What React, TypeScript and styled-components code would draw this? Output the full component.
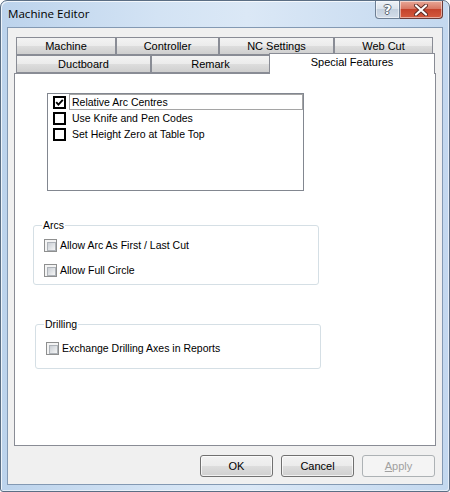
import styled, { createGlobalStyle } from "styled-components";

const GlobalStyle = createGlobalStyle`
  html, body {
    margin: 0;
    padding: 0;
    background: #ffffff;
  }
  body {
    font-family: "Liberation Sans", Arial, sans-serif;
    font-size: 10.5px;
    color: #000;
  }
  * {
    box-sizing: border-box;
  }
`;

const Window = styled.div`
  width: 450px;
  height: 492px;
  display: flex;
  flex-direction: column;
  border: 1px solid #5b6e84;
  border-radius: 7px 7px 3px 3px;
  padding: 0 6px 6px 6px;
  background: linear-gradient(to right, #bcd3ec 0%, #d3e3f4 35%, #dbe8f6 55%, #c3d8ef 100%);
  box-shadow: inset 1px 1px 0 rgba(255, 255, 255, 0.75),
    inset -1px -1px 0 rgba(255, 255, 255, 0.55);
`;

const TitleBar = styled.div`
  height: 26px;
  display: flex;
  justify-content: space-between;
  align-items: flex-start;
  padding-left: 1px;
`;

const Title = styled.div`
  font-family: "Open Sans", "Noto Sans", sans-serif;
  font-size: 11.6px;
  line-height: 16px;
  padding-top: 5px;
  color: #000;
`;

const CaptionButtons = styled.div`
  display: flex;
`;

const CaptionButton = styled.div<{ $close?: boolean }>`
  width: ${(p) => (p.$close ? 43 : 25)}px;
  height: 18px;
  display: flex;
  align-items: center;
  justify-content: center;
  border: 1px solid ${(p) => (p.$close ? "#6b3b38" : "#6e7f94")};
  border-top: none;
  border-radius: ${(p) => (p.$close ? "0 0 4px 0" : "0 0 0 4px")};
  ${(p) => (p.$close ? "border-left: none;" : "")}
  background: ${(p) =>
    p.$close
      ? "linear-gradient(to bottom, #e8a898 0%, #d87864 45%, #c4432c 50%, #d45a3e 100%)"
      : "linear-gradient(to bottom, #eef2f7 0%, #dbe3ec 45%, #c4d0de 50%, #d3dde9 100%)"};
  box-shadow: inset 0 0 0 1px rgba(255, 255, 255, 0.5);
`;

const HelpGlyph = styled.span`
  font-family: "DejaVu Sans", sans-serif;
  font-weight: bold;
  font-size: 13px;
  line-height: 13px;
  color: #ffffff;
  text-shadow: 1px 0 0 #59636f, -1px 0 0 #59636f, 0 1px 0 #59636f, 0 -1px 0 #59636f;
`;

const Client = styled.div`
  flex: 1;
  display: flex;
  flex-direction: column;
  background: #f0f0f0;
  border: 1px solid #8399b3;
  padding: 9px 6px 7px 6px;
`;

const TabControl = styled.div`
  flex: 1;
  display: flex;
  flex-direction: column;
`;

const TabRow = styled.div`
  display: flex;
  height: 18px;
  padding-left: 2px;
`;

const Tab = styled.div<{ $w: number; $active?: boolean }>`
  width: ${(p) => p.$w}px;
  height: ${(p) => (p.$active ? 21 : 18)}px;
  display: flex;
  align-items: center;
  justify-content: center;
  border: 1px solid #898c95;
  line-height: 13px;
  font-size: 11px;
  background: ${(p) =>
    p.$active ? "#ffffff" : "linear-gradient(to bottom, #f3f3f3 0%, #ebebeb 50%, #dddddd 51%, #cfcfcf 100%)"};
  ${(p) =>
    p.$active
      ? `
    margin-top: -2px;
    margin-left: -1px;
    border-bottom: none;
    position: relative;
    z-index: 1;
    padding-bottom: 3px;
  `
      : ""}
`;

const Panel = styled.div`
  flex: 1;
  display: flex;
  flex-direction: column;
  align-items: flex-start;
  border: 1px solid #898c95;
  background: #ffffff;
`;

const ListBox = styled.div`
  margin: 19px 0 0 32px;
  width: 257px;
  height: 98px;
  border: 1px solid #828790;
  background: #ffffff;
`;

const ListItem = styled.div`
  height: 16px;
  display: flex;
  align-items: center;
  padding-left: 5px;
`;

const FlatCheck = styled.div`
  width: 13px;
  height: 13px;
  border: 2px solid #000;
  background: #fff;
  display: flex;
  align-items: center;
  justify-content: center;
`;

const ItemText = styled.div<{ $focus?: boolean }>`
  margin-left: 3px;
  height: 16px;
  width: 234px;
  padding-left: 2px;
  line-height: 14px;
  border: 1px solid ${(p) => (p.$focus ? "#a5a5a5" : "transparent")};
`;

const GroupBox = styled.fieldset<{ $left: number; $top: number; $height: number }>`
  margin: ${(p) => p.$top}px 0 0 ${(p) => p.$left}px;
  width: 286px;
  height: ${(p) => p.$height}px;
  border: 1px solid #d5dfe5;
  border-radius: 3px;
  padding: 0 0 0 11px;
  min-width: 0;
`;

const Legend = styled.legend`
  margin-left: -3px;
  padding: 0 1px;
  line-height: 13px;
`;

const CheckRow = styled.label<{ $gap: number }>`
  display: flex;
  align-items: center;
  height: 13px;
  margin-top: ${(p) => p.$gap}px;
`;

const VistaCheck = styled.span`
  width: 13px;
  height: 13px;
  margin-left: -1px;
  border: 1px solid #8e8f8f;
  background: #f4f4f4;
  padding: 2px;
  display: block;
  &::after {
    content: "";
    display: block;
    width: 7px;
    height: 7px;
    border: 1px solid #aeb3b9;
    background: linear-gradient(135deg, #cbcfd5 0%, #dfe2e5 50%, #f6f6f6 100%);
  }
`;

const CheckText = styled.span`
  margin-left: 3px;
  line-height: 13px;
`;

const ButtonRow = styled.div`
  display: flex;
  justify-content: flex-end;
  gap: 8px;
  margin-top: 9px;
  padding-right: 1px;
`;

const Button = styled.button<{ $disabled?: boolean }>`
  width: 73px;
  height: 22px;
  font-family: "Liberation Sans", Arial, sans-serif;
  font-size: 11px;
  padding: 0;
  border-radius: 3px;
  border: 1px solid ${(p) => (p.$disabled ? "#adb2b5" : "#707070")};
  color: ${(p) => (p.$disabled ? "#a0a0a0" : "#000")};
  background: ${(p) =>
    p.$disabled
      ? "#f4f4f4"
      : "linear-gradient(to bottom, #f2f2f2 0%, #ebebeb 50%, #dddddd 51%, #cfcfcf 100%)"};
  box-shadow: ${(p) => (p.$disabled ? "none" : "inset 0 0 0 1px rgba(255,255,255,0.7)")};
`;

const rowOne = [
  { label: "Machine", w: 100 },
  { label: "Controller", w: 103 },
  { label: "NC Settings", w: 115 },
  { label: "Web Cut", w: 99 },
];

const listItems = [
  { text: "Relative Arc Centres", checked: true },
  { text: "Use Knife and Pen Codes", checked: false },
  { text: "Set Height Zero at Table Top", checked: false },
];

function App() {
  return (
    <>
      <GlobalStyle />
      <Window>
        <TitleBar>
          <Title>Machine Editor</Title>
          <CaptionButtons>
            <CaptionButton>
              <HelpGlyph>?</HelpGlyph>
            </CaptionButton>
            <CaptionButton $close>
              <svg width="14" height="12" viewBox="0 0 14 12">
                <path d="M2 1.5 L12 10.5 M12 1.5 L2 10.5" stroke="#5a2a24" strokeWidth="4" strokeLinecap="round" />
                <path d="M2 1.5 L12 10.5 M12 1.5 L2 10.5" stroke="#ffffff" strokeWidth="2.2" strokeLinecap="round" />
              </svg>
            </CaptionButton>
          </CaptionButtons>
        </TitleBar>
        <Client>
          <TabControl>
            <TabRow>
              {rowOne.map((t) => (
                <Tab key={t.label} $w={t.w}>
                  {t.label}
                </Tab>
              ))}
            </TabRow>
            <TabRow>
              <Tab $w={135}>Ductboard</Tab>
              <Tab $w={119}>Remark</Tab>
              <Tab $w={166} $active>
                Special Features
              </Tab>
            </TabRow>
            <Panel>
              <ListBox>
                {listItems.map((it, i) => (
                  <ListItem key={it.text}>
                    <FlatCheck>
                      {it.checked && (
                        <svg width="9" height="9" viewBox="0 0 9 9">
                          <path d="M1.2 4.2 L3.4 6.6 L7.8 1.8" fill="none" stroke="#000" strokeWidth="1.9" />
                        </svg>
                      )}
                    </FlatCheck>
                    <ItemText $focus={i === 0}>{it.text}</ItemText>
                  </ListItem>
                ))}
              </ListBox>
              <GroupBox $left={18} $top={28} $height={66}>
                <Legend>Arcs</Legend>
                <CheckRow $gap={7}>
                  <VistaCheck />
                  <CheckText>Allow Arc As First / Last Cut</CheckText>
                </CheckRow>
                <CheckRow $gap={12}>
                  <VistaCheck />
                  <CheckText>Allow Full Circle</CheckText>
                </CheckRow>
              </GroupBox>
              <GroupBox $left={20} $top={33} $height={51}>
                <Legend>Drilling</Legend>
                <CheckRow $gap={11}>
                  <VistaCheck />
                  <CheckText>Exchange Drilling Axes in Reports</CheckText>
                </CheckRow>
              </GroupBox>
            </Panel>
          </TabControl>
          <ButtonRow>
            <Button>OK</Button>
            <Button>Cancel</Button>
            <Button $disabled disabled>
              <u>A</u>pply
            </Button>
          </ButtonRow>
        </Client>
      </Window>
    </>
  );
}

export default App;
